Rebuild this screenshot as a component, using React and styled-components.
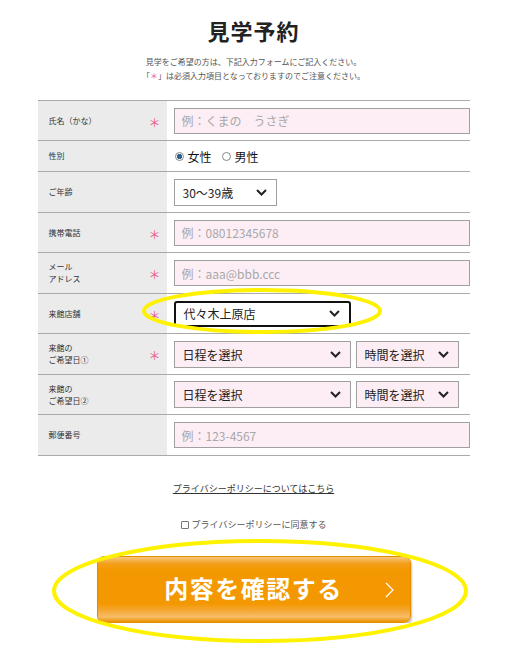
import React from 'react';
import styled, { createGlobalStyle } from 'styled-components';

const GlobalStyle = createGlobalStyle`
  body {
    margin: 0;
    background: #fff;
    font-family: "Noto Sans CJK JP", "Noto Sans", sans-serif;
    color: #333;
  }
`;

const Page = styled.div`
  width: 432px;
  margin: 0 auto;
  padding-top: 15px;
`;

const Title = styled.h1`
  margin: 0;
  font-size: 22px;
  line-height: 30px;
  font-weight: bold;
  text-align: center;
  color: #222;
  letter-spacing: 1px;
`;

const Intro = styled.p`
  margin: 10px 0 0;
  font-size: 8px;
  line-height: 14px;
  text-align: center;
  color: #555;
`;

const Star = styled.span`
  color: #e75c8c;
`;

const Table = styled.div`
  margin-top: 17px;
  border-top: 1px solid #aaa;
`;

const Row = styled.div`
  display: grid;
  grid-template-columns: 129px 1fr;
  height: ${p => p.$h || 40}px;
  border-bottom: 1px solid #aaa;
  box-sizing: border-box;
`;

const LabelCell = styled.div`
  display: flex;
  align-items: center;
  justify-content: space-between;
  background: #ebebeb;
  padding: 0 6px 0 11px;
  font-size: 8px;
  line-height: 12px;
  color: #333;
`;

const Required = styled.span`
  color: #e75c8c;
  font-size: 12px;
  line-height: 1;
  margin-top: 4px;
`;

const FieldCell = styled.div`
  display: flex;
  align-items: center;
  gap: 5px;
  padding-left: 7px;
`;

const TextInput = styled.input`
  box-sizing: border-box;
  width: 100%;
  height: 26px;
  border: 1px solid #a0a0a0;
  background: #fdeef6;
  padding: 0 7px;
  font-family: inherit;
  font-size: 12px;
  color: #222;
  outline: none;

  &::placeholder {
    color: #a8a8a8;
  }
`;

const SelectBox = styled.div`
  box-sizing: border-box;
  width: ${p => p.$w}px;
  height: ${p => (p.$focus ? 26 : 27)}px;
  display: flex;
  align-items: center;
  justify-content: space-between;
  padding: 0 9px 0 8px;
  border: ${p => (p.$focus ? '2px solid #111' : '1px solid #a0a0a0')};
  border-radius: ${p => (p.$focus ? '3px' : '0')};
  background: ${p => (p.$pink ? '#fdeef6' : '#fff')};
  font-size: 12px;
  color: #222;
`;

const Radios = styled.div`
  display: flex;
  align-items: center;
  gap: 10px;
  font-size: 12px;
  color: #111;
  padding-left: 1px;
`;

const RadioItem = styled.label`
  display: flex;
  align-items: center;
  gap: 4px;
`;

const RadioDot = styled.span`
  box-sizing: border-box;
  width: 9px;
  height: 9px;
  border-radius: 50%;
  border: 1px solid #888;
  background: ${p => (p.$on ? 'radial-gradient(circle, #2d5f93 0 2.4px, #fff 2.9px)' : '#fff')};
`;

const Footer = styled.div`
  display: flex;
  flex-direction: column;
  align-items: center;
`;

const PolicyLink = styled.a`
  margin-top: 26px;
  font-size: 9px;
  line-height: 14px;
  color: #333;
  text-decoration: underline;
`;

const Agree = styled.label`
  margin-top: 22px;
  display: flex;
  align-items: center;
  gap: 3px;
  font-size: 9px;
  line-height: 14px;
  color: #555;
`;

const Box = styled.span`
  box-sizing: border-box;
  width: 8px;
  height: 8px;
  border: 1px solid #777;
  border-radius: 1px;
  background: #fff;
`;

const ConfirmButton = styled.button`
  position: relative;
  margin-top: 24px;
  width: 314px;
  height: 67px;
  border: 1px solid #e28d00;
  border-radius: 7px;
  background: linear-gradient(
    to bottom,
    #f8c67a 0%,
    #f4a01d 10%,
    #f39800 20%,
    #f39800 72%,
    #f5ab3c 84%,
    #f7bd68 92%,
    #ec9200 100%
  );
  box-shadow: 1px 2px 2px rgba(0, 0, 0, 0.25);
  color: #fff;
  font-family: inherit;
  font-size: 24px;
  font-weight: bold;
  letter-spacing: 1.5px;
  display: flex;
  align-items: center;
  justify-content: center;
  padding: 0 0 4px;
`;

const Arrow = styled.svg`
  position: absolute;
  right: 16px;
  top: 25px;
`;

const Overlay = styled.svg`
  position: absolute;
  top: 0;
  left: 0;
  pointer-events: none;
`;

const Chevron = () => (
  <svg width="11" height="7" viewBox="0 0 11 7">
    <polyline points="1,1 5.5,5.5 10,1" fill="none" stroke="#222" strokeWidth="2" />
  </svg>
);

const Select = ({ w, pink, focus, children }) => (
  <SelectBox $w={w} $pink={pink} $focus={focus}>
    <span>{children}</span>
    <Chevron />
  </SelectBox>
);

const Label = ({ children, required }) => (
  <LabelCell>
    <span>{children}</span>
    {required && <Required>＊</Required>}
  </LabelCell>
);

export default function App() {
  return (
    <>
      <GlobalStyle />
      <Page>
        <Title>見学予約</Title>
        <Intro>
          見学をご希望の方は、下記入力フォームにご記入ください。
          <br />
          「<Star>＊</Star>」は必須入力項目となっておりますのでご注意ください。
        </Intro>

        <Table>
          <Row>
            <Label required>氏名（かな）</Label>
            <FieldCell>
              <TextInput placeholder="例：くまの　うさぎ" />
            </FieldCell>
          </Row>
          <Row $h={31}>
            <Label>性別</Label>
            <FieldCell>
              <Radios>
                <RadioItem>
                  <RadioDot $on />
                  女性
                </RadioItem>
                <RadioItem>
                  <RadioDot />
                  男性
                </RadioItem>
              </Radios>
            </FieldCell>
          </Row>
          <Row $h={41}>
            <Label>ご年齢</Label>
            <FieldCell>
              <Select w={103}>30〜39歳</Select>
            </FieldCell>
          </Row>
          <Row>
            <Label required>携帯電話</Label>
            <FieldCell>
              <TextInput placeholder="例：08012345678" />
            </FieldCell>
          </Row>
          <Row $h={41}>
            <Label required>
              メール
              <br />
              アドレス
            </Label>
            <FieldCell>
              <TextInput placeholder="例：aaa@bbb.ccc" />
            </FieldCell>
          </Row>
          <Row>
            <Label required>来館店舗</Label>
            <FieldCell>
              <Select w={177} focus>
                代々木上原店
              </Select>
            </FieldCell>
          </Row>
          <Row $h={41}>
            <Label required>
              来館の
              <br />
              ご希望日①
            </Label>
            <FieldCell>
              <Select w={177} pink>
                日程を選択
              </Select>
              <Select w={103} pink>
                時間を選択
              </Select>
            </FieldCell>
          </Row>
          <Row>
            <Label>
              来館の
              <br />
              ご希望日②
            </Label>
            <FieldCell>
              <Select w={177} pink>
                日程を選択
              </Select>
              <Select w={103} pink>
                時間を選択
              </Select>
            </FieldCell>
          </Row>
          <Row $h={41}>
            <Label>郵便番号</Label>
            <FieldCell>
              <TextInput placeholder="例：123-4567" />
            </FieldCell>
          </Row>
        </Table>

        <Footer>
          <PolicyLink href="#">プライバシーポリシーについてはこちら</PolicyLink>
          <Agree>
            <Box />
            プライバシーポリシーに同意する
          </Agree>
          <ConfirmButton type="button">
            内容を確認する
            <Arrow width="9" height="16" viewBox="0 0 9 16">
              <polyline points="1,1 8,8 1,15" fill="none" stroke="#fff" strokeWidth="1.2" />
            </Arrow>
          </ConfirmButton>
        </Footer>
      </Page>

      <Overlay width="507" height="653" viewBox="0 0 507 653">
        <ellipse cx="262" cy="311" rx="118" ry="21" fill="none" stroke="#fff200" strokeWidth="4" />
        <ellipse cx="260" cy="591" rx="206" ry="50" fill="none" stroke="#fff200" strokeWidth="4" />
      </Overlay>
    </>
  );
}
